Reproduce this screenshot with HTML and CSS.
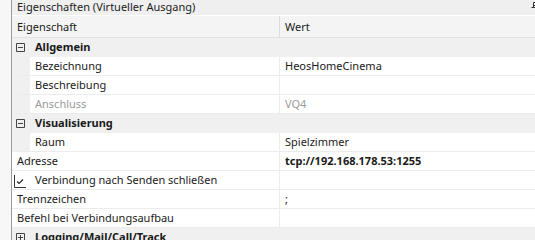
FILE: index.html
```html
<!DOCTYPE html>
<html lang="de">
<head>
    <meta charset="UTF-8">
    <title>Eigenschaften (Virtueller Ausgang)</title>
    <link rel="stylesheet" href="styles.css">
</head>
<body>
    <div class="panel">
        <div class="title">
            <span>Eigenschaften (Virtueller Ausgang)</span>
            <svg class="pin" width="10" height="10" viewBox="0 0 10 10">
                <path d="M2.5 0.5h5v5h-5zM2.5 3.5h5M0.5 5.5h9M5 5.5v4" fill="none" stroke="#333" stroke-width="1"/>
            </svg>
        </div>
        <div class="grid-head">
            <div class="cell">Eigenschaft</div>
            <div class="cell">Wert</div>
        </div>

        <div class="row category">
            <div class="cell">
                <svg class="toggle" width="9" height="9" viewBox="0 0 9 9"><path d="M0.5 0.5h8v8h-8zM2 4.5h5" fill="none" stroke="#444"/></svg>
                <b>Allgemein</b>
            </div>
            <div class="cell"></div>
        </div>
        <div class="row child">
            <div class="cell"><span class="indent"></span>Bezeichnung</div>
            <div class="cell">HeosHomeCinema</div>
        </div>
        <div class="row child">
            <div class="cell"><span class="indent"></span>Beschreibung</div>
            <div class="cell"></div>
        </div>
        <div class="row child disabled">
            <div class="cell"><span class="indent"></span>Anschluss</div>
            <div class="cell">VQ4</div>
        </div>

        <div class="row category">
            <div class="cell">
                <svg class="toggle" width="9" height="9" viewBox="0 0 9 9"><path d="M0.5 0.5h8v8h-8zM2 4.5h5" fill="none" stroke="#444"/></svg>
                <b>Visualisierung</b>
            </div>
            <div class="cell"></div>
        </div>
        <div class="row child">
            <div class="cell"><span class="indent"></span>Raum</div>
            <div class="cell">Spielzimmer</div>
        </div>

        <div class="row">
            <div class="cell">Adresse</div>
            <div class="cell"><b>tcp://192.168.178.53:1255</b></div>
        </div>
        <div class="row check">
            <div class="cell">
                <svg class="box" width="12" height="13" viewBox="0 0 12 13"><path d="M0.5 0v12.5h12" fill="none" stroke="#333"/><path d="M3 6.5l2 2l4-4" fill="none" stroke="#222" stroke-width="1.1"/></svg>
                Verbindung nach Senden schließen
            </div>
            <div class="cell"></div>
        </div>
        <div class="row">
            <div class="cell">Trennzeichen</div>
            <div class="cell">;</div>
        </div>
        <div class="row">
            <div class="cell">Befehl bei Verbindungsaufbau</div>
            <div class="cell"></div>
        </div>

        <div class="row category">
            <div class="cell">
                <svg class="toggle" width="9" height="9" viewBox="0 0 9 9"><path d="M0.5 0.5h8v8h-8zM2 4.5h5M4.5 2v5" fill="none" stroke="#444"/></svg>
                <b>Logging/Mail/Call/Track</b>
            </div>
            <div class="cell"></div>
        </div>
    </div>
</body>
</html>
```

FILE: styles.css
```css
body {
    margin: 0;
    background: #f7f7f7;
    font-family: "Noto Sans", sans-serif;
    font-size: 11px;
    color: #1a1a1a;
    overflow: hidden;
}
.panel {
    margin-left: 11px;
    border-left: 1px solid #9c9c9c;
    height: 240px;
    background: #fff;
}
.title {
    height: 15px;
    line-height: 14px;
    padding-left: 5px;
    background: #efefef;
    border-bottom: 1px solid #fff;
    display: flex;
    justify-content: space-between;
    color: #222;
}
.pin {
    margin-top: 2px;
    margin-right: -6px;
}
.grid-head {
    display: grid;
    grid-template-columns: 267px 1fr;
    height: 21px;
    background: #f4f4f4;
    border-bottom: 1px solid #e2e2e2;
}
.grid-head .cell {
    line-height: 21px;
    padding-left: 5px;
}
.grid-head .cell + .cell {
    border-left: 1px solid #dcdcdc;
}
.row {
    display: grid;
    grid-template-columns: 267px 1fr;
    height: 18px;
    border-bottom: 1px solid #ececec;
    background: #fff;
}
.row .cell {
    line-height: 18px;
    padding-left: 5px;
    display: flex;
    align-items: center;
    white-space: nowrap;
}
.row .cell + .cell {
    border-left: 1px solid #ececec;
}
.category {
    background: #f0f0f0;
    border-bottom-color: #f0f0f0;
}
.category .cell + .cell {
    border-left: none;
}
.toggle {
    margin-left: -1px;
    margin-right: 10px;
}
.child .cell:first-child {
    padding-left: 0;
}
.indent {
    align-self: stretch;
    width: 18px;
    background: #f0f0f0;
    margin-right: 5px;
}
.disabled {
    color: #9a9a9a;
}
.box {
    margin-left: -3px;
    margin-right: 9px;
    margin-top: 2px;
}
```
